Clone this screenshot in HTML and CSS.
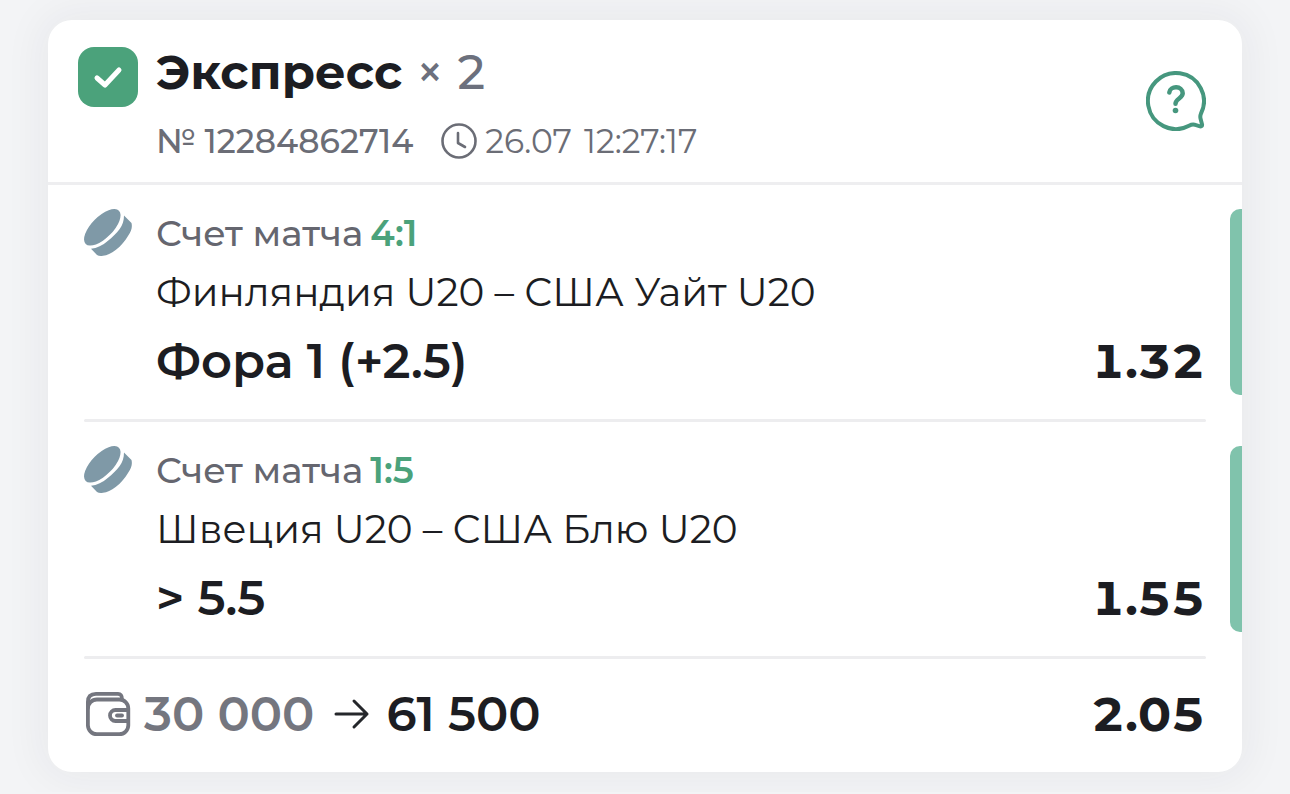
FILE: index.html
```
<!DOCTYPE html>
<html lang="ru">
<head>
    <meta charset="UTF-8">
    <meta name="viewport" content="width=device-width, initial-scale=1.0">
    <title>Экспресс</title>
    <link rel="stylesheet" href="styles.css">
</head>
<body>
    <main class="bet-card">
        <header class="bet-header">
            <span class="status">
                <svg width="60" height="60" viewBox="0 0 60 60" aria-hidden="true">
                    <path d="M19 31l8 7 14-15" fill="none" stroke="#fff" stroke-width="5" stroke-linecap="round" stroke-linejoin="round"/>
                </svg>
            </span>
            <div class="bet-info">
                <h1 class="bet-title">Экспресс <span class="times">×</span> <span class="count">2</span></h1>
                <div class="bet-meta">
                    <span class="bet-number">№ 12284862714</span>
                    <svg width="36" height="36" viewBox="0 0 36 36" fill="none" stroke="#6b6d76" stroke-width="2.6" stroke-linecap="round" stroke-linejoin="round" aria-hidden="true">
                        <circle cx="18" cy="18" r="16.5"/>
                        <path d="M17 10v10l7 4"/>
                    </svg>
                    <time class="bet-time"><span>26.07</span> <span>12:27:17</span></time>
                </div>
            </div>
            <button type="button" class="help-btn" aria-label="Помощь">
                <svg width="60" height="60" viewBox="0 0 60 60" fill="none" stroke="#46977e" stroke-width="4" stroke-linecap="round" stroke-linejoin="round" aria-hidden="true">
                    <path d="M55 42.500A28 28 0 1 0 43 54.800C45 53.700 46.500 53.200 48.500 53.700L54 55.300C55.700 55.700 56.400 54.700 56 53.200L54.500 47.500C54 45.500 54.200 44.500 55 42.500Z"/>
                    <path stroke-width="4.500" d="M23.300 21.500C24 14.500 36.700 14.500 36.700 22.300C36.700 27.500 29.500 27.500 29.500 32.800"/>
                    <circle cx="29.500" cy="39.500" r="2.800" fill="#46977e" stroke="none"/>
                </svg>
            </button>
        </header>

        <section class="event">
            <svg class="puck" width="48" height="48" viewBox="0 0 48 48" fill="#7f99a7" aria-hidden="true">
                <ellipse cx="18.300" cy="18.300" rx="23.500" ry="10.700" transform="rotate(-45 18.300 18.300)"/>
                <path d="M40 6.500L47.500 14C48.500 18 47.500 22 44 27C41 32 37 37 32 40.700C27 44.500 23 46.500 19 46.800C16.500 47.200 14.500 47 13 46L7 39.700C13 39 18.500 36.500 24 31.700C28 28.500 32.500 24.500 35.700 20C38.500 16 40 12 40 6.500Z"/>
            </svg>
            <div class="event-info">
                <p class="score">Счет матча<b>4:1</b></p>
                <h2 class="teams">Финляндия U20 – США Уайт U20</h2>
                <p class="pick"><span>Фора 1 (+2.5)</span> <span class="odds">1.32</span></p>
            </div>
            <span class="marker"></span>
        </section>

        <section class="event">
            <svg class="puck" width="48" height="48" viewBox="0 0 48 48" fill="#7f99a7" aria-hidden="true">
                <ellipse cx="18.300" cy="18.300" rx="23.500" ry="10.700" transform="rotate(-45 18.300 18.300)"/>
                <path d="M40 6.500L47.500 14C48.500 18 47.500 22 44 27C41 32 37 37 32 40.700C27 44.500 23 46.500 19 46.800C16.500 47.200 14.500 47 13 46L7 39.700C13 39 18.500 36.500 24 31.700C28 28.500 32.500 24.500 35.700 20C38.500 16 40 12 40 6.500Z"/>
            </svg>
            <div class="event-info">
                <p class="score">Счет матча<b>1:5</b></p>
                <h2 class="teams">Швеция U20 – США Блю U20</h2>
                <p class="pick"><span>&gt; 5.5</span> <span class="odds">1.55</span></p>
            </div>
            <span class="marker"></span>
        </section>

        <footer class="bet-total">
            <svg width="48" height="48" viewBox="0 0 48 48" fill="none" stroke="#74767f" stroke-width="3.800" stroke-linecap="round" stroke-linejoin="round" aria-hidden="true">
                <rect x="3.900" y="9.500" width="40.400" height="34.700" rx="9"/>
                <path d="M3.900 18V12C3.900 6.500 7 3.900 12 3.900H34C37 3.900 38 5.500 38 9.500"/>
                <path d="M44 20H31.500A5.500 5.500 0 0 0 31.500 31H44"/>
                <path d="M33 25.500h5"/>
            </svg>
            <span class="stake">30 000</span>
            <svg width="36" height="32" viewBox="0 0 36 32" fill="none" stroke="#25272b" stroke-width="3" stroke-linecap="round" stroke-linejoin="round" aria-hidden="true">
                <path d="M2 16h31M20 3l13 13-13 13"/>
            </svg>
            <span class="payout">61 500</span>
            <span class="odds">2.05</span>
        </footer>
    </main>
</body>
</html>
```
FILE: styles.css
```
* {
    box-sizing: border-box;
}

body {
    margin: 0;
    padding: 20px 48px;
    background-color: #f3f4f6;
    color: #1c1d22;
    font-family: Montserrat, Inter, sans-serif;
}

h1, h2, p {
    margin: 0;
}

svg {
    display: block;
    flex-shrink: 0;
}

.bet-card {
    background-color: #fff;
    border-radius: 24px;
    box-shadow: 0 0 40px 8px rgba(40, 45, 60, 0.05);
    overflow: hidden;
}

/* Header */
.bet-header {
    display: flex;
    align-items: center;
    gap: 18px;
    padding: 20px 36px 20px 30px;
    border-bottom: 3px solid #eeeef0;
}

.status {
    align-self: flex-start;
    margin-top: 7px;
    border-radius: 16px;
    background-color: #4ba27b;
}

.bet-info {
    flex: 1;
    padding-top: 4px;
}

.bet-title {
    font-size: 48px;
    line-height: 56px;
    font-weight: 700;
}

.times, .count {
    color: #6c707d;
    font-weight: 500;
}

.times {
    font-size: 48px;
}

.bet-meta {
    display: flex;
    align-items: center;
    margin-top: 20px;
    color: #6b6d76;
    font-size: 33px;
    line-height: 42px;
}

.bet-number {
    margin-right: 28px;
    font-weight: 500;
}

.bet-time {
    display: flex;
    gap: 12px;
    margin-left: 8px;
}

.help-btn {
    padding: 0;
    border: none;
    background: none;
    cursor: pointer;
}

/* Events */
.event {
    display: flex;
    align-items: flex-start;
    padding: 24px 0 24px 36px;
}

.event + .event, .bet-total {
    position: relative;
}

.event + .event::before, .bet-total::before {
    content: "";
    position: absolute;
    top: 0;
    left: 36px;
    right: 36px;
    height: 3px;
    border-radius: 2px;
    background-color: #ededef;
}

.event + .event {
    padding-top: 27px;
}

.event-info {
    flex: 1;
    margin-left: 24px;
}

.score {
    color: #65666f;
    font-size: 36px;
    line-height: 48px;
    font-weight: 500;
}

.score b {
    margin-left: 7px;
    color: #4ba27b;
    font-weight: 600;
}

.teams {
    font-size: 39px;
    line-height: 70px;
    font-weight: 400;
}

.pick {
    display: flex;
    justify-content: space-between;
    font-size: 48px;
    line-height: 68px;
    font-weight: 600;
}

.odds {
    font-size: 48px;
    font-weight: 700;
    font-variant-numeric: tabular-nums;
}

.marker {
    align-self: stretch;
    width: 12px;
    margin-left: 25px;
    border-radius: 10px 0 0 10px;
    background-color: #80c3ac;
}

/* Total */
.bet-total {
    display: flex;
    align-items: center;
    padding: 28px 37px 28px 36px;
    font-size: 48px;
    line-height: 60px;
    font-weight: 600;
}

.stake {
    margin: 0 20px 0 12px;
    color: #74767f;
}

.payout {
    margin-left: 16px;
}

.bet-total .odds {
    margin-left: auto;
}
```
